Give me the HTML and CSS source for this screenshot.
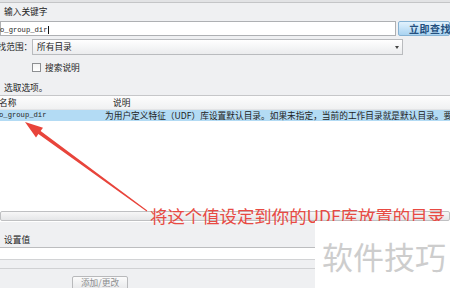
FILE: index.html
```html
<!DOCTYPE html>
<html lang="zh-CN">
<head>
    <meta charset="UTF-8">
    <meta name="viewport" content="width=device-width, initial-scale=1.0">
    <title>选项查找</title>
    <link rel="stylesheet" href="styles.css">
</head>
<body>
    <div class="topbar"></div>
    <div class="kw-label">输入关键字</div>
    <div class="search-row">
        <div class="kw-input"><span class="mono kw-text">o_group_dir</span></div>
        <div class="find-btn">立即查找</div>
    </div>
    <div class="scope-row">
        <div class="scope-label">查找范围：</div>
        <div class="scope-select">
            <span>所有目录</span>
            <span class="drop-arrow"></span>
        </div>
    </div>
    <div class="check-row">
        <span class="cbox"></span>
        <span>搜索说明</span>
    </div>
    <div class="pick-label">选取选项。</div>

    <div class="list">
        <div class="list-head">
            <span class="head-name">名称</span>
            <span>说明</span>
        </div>
        <div class="list-row selected">
            <span class="row-name mono">o_group_dir</span>
            <span class="row-desc">为用户定义特征（UDF）库设置默认目录。如果未指定，当前的工作目录就是默认目录。要</span>
        </div>
        <div class="list-fill"></div>
    </div>
    <div class="hscroll"><div class="hscroll-bar"></div></div>

    <div class="bottom">
        <div class="set-label">设置值</div>
        <div class="set-input"></div>
        <div class="set-sep"></div>
        <div class="btn-row">
            <div class="add-btn">添加/更改</div>
        </div>
    </div>

    <!-- annotation drawn over the dialog -->
    <svg class="arrow" width="450" height="288" viewBox="0 0 450 288">
        <polygon fill="#e8443b" points="25,122 43,127.8 40.6,131.1 147.3,210.6 146.7,211.4 38.4,134.1 36,137.4"/>
    </svg>
    <div class="note">将这个值设定到你的UDF库放置的目录</div>
    <div class="watermark">软件技巧</div>
</body>
</html>
```

FILE: styles.css
```css
body {
    margin: 0;
    width: 450px;
    height: 288px;
    overflow: hidden;
    position: relative;
    background-color: #eff0f2;
    font-family: "Noto Sans CJK SC", "Noto Sans", sans-serif;
    font-size: 8.7px;
    color: #222;
}
.mono {
    font-family: "Liberation Mono", monospace;
    font-size: 7.2px;
}
.topbar {
    height: 2px;
    background-color: #e2e3e5;
    border-bottom: 1px solid #c4c5c7;
}
.kw-label {
    height: 18px;
    line-height: 18px;
    padding-left: 4px;
}
.search-row {
    display: flex;
    height: 15px;
}
.kw-input {
    width: 403px;
    box-sizing: border-box;
    background-color: #fff;
    border: 1px solid #aeb0b3;
    line-height: 13px;
    white-space: nowrap;
}
.kw-text {
    margin-left: -1px;
    padding-right: 1px;
    border-right: 1px solid #111;
}
.find-btn {
    margin-left: 2px;
    width: 52px;
    box-sizing: border-box;
    padding-left: 10px;
    border: 1px solid #86b2d3;
    border-radius: 2px;
    background: linear-gradient(#e2f2fd, #a9d3f1);
    color: #24507e;
    font-size: 10px;
    font-weight: bold;
    line-height: 13px;
    letter-spacing: 0.5px;
    white-space: nowrap;
}
.scope-row {
    display: flex;
    margin-top: 3px;
    height: 16px;
    line-height: 16px;
}
.scope-label {
    width: 32px;
    text-indent: -11.2px;
    white-space: nowrap;
}
.scope-select {
    width: 371px;
    box-sizing: border-box;
    display: flex;
    justify-content: space-between;
    align-items: center;
    padding: 0 3px 0 4px;
    border: 1px solid #b9bbbe;
    background: linear-gradient(#ffffff, #ebecee);
    line-height: 14px;
}
.drop-arrow {
    width: 0;
    height: 0;
    border-left: 2.5px solid transparent;
    border-right: 2.5px solid transparent;
    border-top: 3px solid #444;
}
.check-row {
    display: flex;
    align-items: center;
    margin-top: 3px;
    height: 19px;
    padding-left: 32px;
}
.cbox {
    width: 9px;
    height: 9px;
    box-sizing: border-box;
    margin-right: 4px;
    border: 1px solid #8d8f92;
    background: linear-gradient(#f4f4f4, #ffffff);
}
.pick-label {
    padding: 6px 0 0 4px;
    height: 12px;
    line-height: 10px;
    border-bottom: 1px solid #c6c7c9;
}
.list {
    background-color: #fff;
}
.list-head {
    display: flex;
    height: 13px;
    line-height: 13px;
    background: linear-gradient(#fdfdfd, #f0f1f2);
    border-bottom: 1px solid #e3e4e6;
}
.head-name {
    width: 113px;
    text-indent: -1px;
}
.list-row {
    display: flex;
    height: 11px;
    line-height: 11px;
    white-space: nowrap;
}
.selected {
    background-color: #b3dbf4;
}
.row-name {
    width: 105px;
    flex-shrink: 0;
    text-indent: -1px;
}
.list-fill {
    height: 87px;
}
.hscroll {
    background-color: #fff;
    padding: 3px 0 1px;
}
.hscroll-bar {
    height: 10px;
    box-sizing: border-box;
    border: 1px solid #bfc0c2;
    border-radius: 2px;
    background: linear-gradient(#f7f7f7, #e5e6e8);
}
.bottom {
    height: 66px;
}
.set-label {
    padding: 13px 0 0 4px;
    line-height: 10px;
}
.set-input {
    margin-top: 2px;
    height: 11px;
    background-color: #fff;
    border-top: 1px solid #bcbdbf;
    border-bottom: 1px solid #d2d3d5;
}
.set-sep {
    margin-top: 8px;
    border-top: 1px solid #d0d1d3;
}
.btn-row {
    padding: 7px 0 0 72px;
}
.add-btn {
    width: 56px;
    height: 14px;
    box-sizing: border-box;
    border: 1px solid #b8b9bb;
    border-radius: 2px;
    background: linear-gradient(#fbfbfb, #e7e8ea);
    color: #8a8b8d;
    text-align: center;
    line-height: 12px;
}
.arrow {
    position: absolute;
    left: 0;
    top: 0;
    pointer-events: none;
}
.note {
    position: absolute;
    left: 150px;
    top: 207px;
    font-size: 17.4px;
    line-height: 17px;
    color: #e84a43;
    white-space: nowrap;
}
.watermark {
    position: absolute;
    left: 315px;
    top: 221px;
    width: 135px;
    height: 67px;
    box-sizing: border-box;
    padding: 19px 0 0 7px;
    background-color: #fff;
    font-size: 31px;
    line-height: 31px;
    color: #cdcdcd;
    white-space: nowrap;
}
```
